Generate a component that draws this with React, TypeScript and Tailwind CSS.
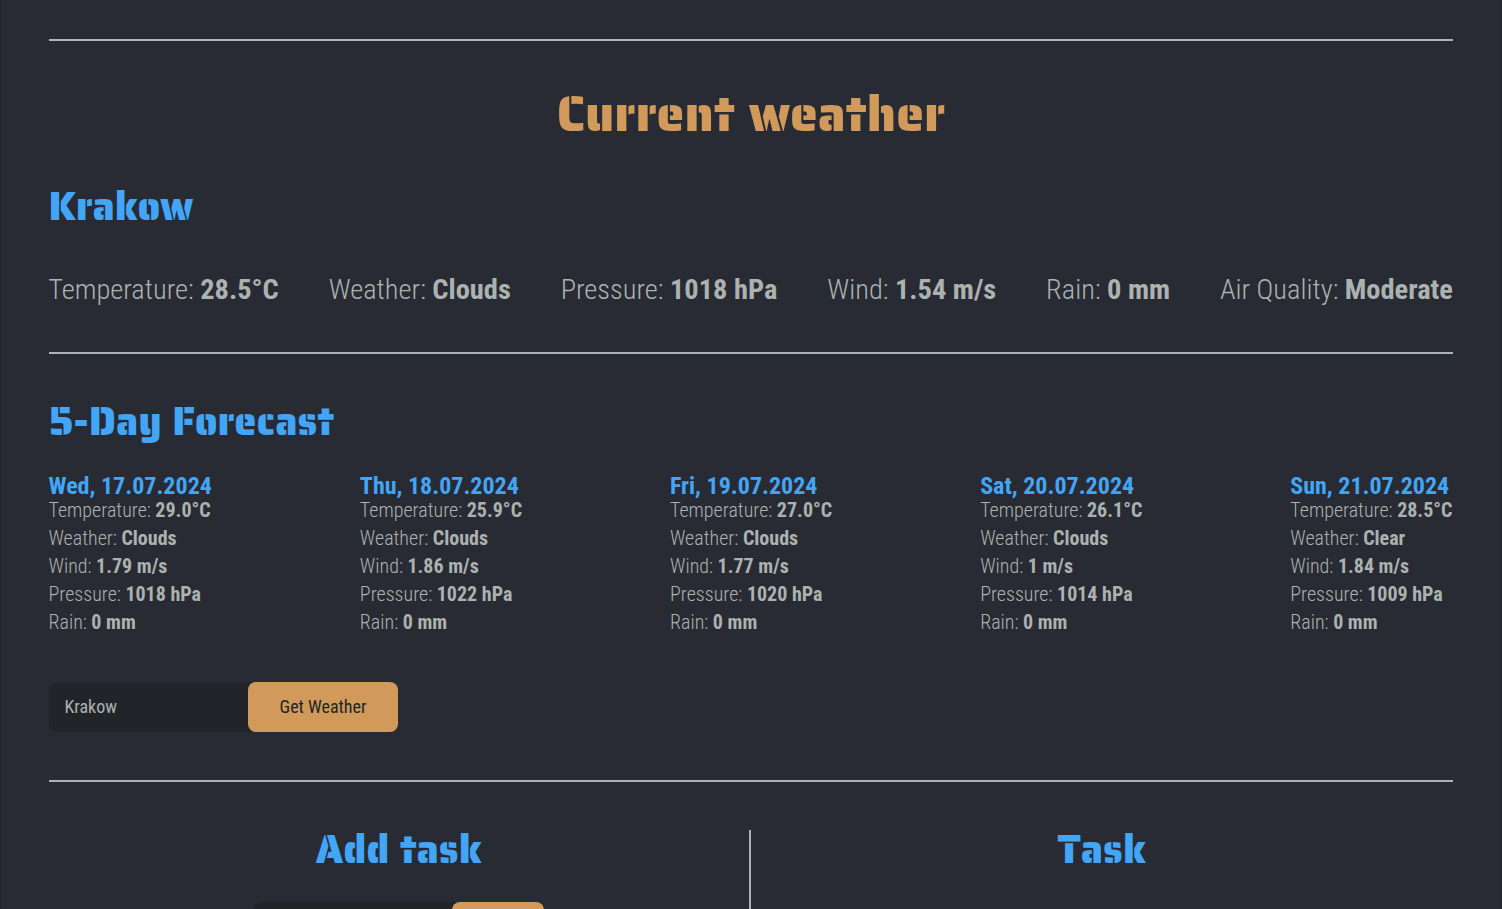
import React from "react";

const current = [
  ["Temperature", "28.5°C"],
  ["Weather", "Clouds"],
  ["Pressure", "1018 hPa"],
  ["Wind", "1.54 m/s"],
  ["Rain", "0 mm"],
  ["Air Quality", "Moderate"],
];

const forecast = [
  { date: "Wed, 17.07.2024", temperature: "29.0°C", weather: "Clouds", wind: "1.79 m/s", pressure: "1018 hPa", rain: "0 mm" },
  { date: "Thu, 18.07.2024", temperature: "25.9°C", weather: "Clouds", wind: "1.86 m/s", pressure: "1022 hPa", rain: "0 mm" },
  { date: "Fri, 19.07.2024", temperature: "27.0°C", weather: "Clouds", wind: "1.77 m/s", pressure: "1020 hPa", rain: "0 mm" },
  { date: "Sat, 20.07.2024", temperature: "26.1°C", weather: "Clouds", wind: "1 m/s", pressure: "1014 hPa", rain: "0 mm" },
  { date: "Sun, 21.07.2024", temperature: "28.5°C", weather: "Clear", wind: "1.84 m/s", pressure: "1009 hPa", rain: "0 mm" },
];

function Rule() {
  return <div className="h-0.5 shrink-0 bg-[#abb2bf]" />;
}

function Heading({ children }: { children: React.ReactNode }) {
  return (
    <h2 className="-ml-[0.5px] h-12 whitespace-nowrap font-['Saira_Stencil_One','Inter',sans-serif] text-[40px] leading-12 font-normal text-[#42a5f5]">
      {children}
    </h2>
  );
}

function Reading({ label, value }: { label: string; value: string }) {
  return (
    <p className="whitespace-nowrap">
      {label}: <strong className="font-bold">{value}</strong>
    </p>
  );
}

export default function App() {
  return (
    <main className="h-[909px] overflow-hidden border-x border-[#20242b] bg-[#282b33] px-12 pt-[39px] font-['Roboto_Condensed','Roboto',sans-serif] font-light text-[#abb2b0] font-stretch-condensed">
      <Rule />
      <h1 className="mt-[41px] mb-[37px] h-16 text-center font-['Saira_Stencil_One','Inter',sans-serif] text-[50px] leading-16 font-normal text-[#d19a5b]">
        Current weather
      </h1>
      <Heading>Krakow</Heading>
      <div className="mt-[39px] -ml-[0.75px] flex h-10 justify-between text-[28.45px] leading-10">
        {current.map(([label, value]) => <Reading key={label} label={label} value={value} />)}
      </div>
      <div className="mt-[42px]"><Rule /></div>
      <div className="mt-[44px]"><Heading>5-Day Forecast</Heading></div>
      <div className="-ml-[0.5px] mt-[28px] mr-[0.5px] flex justify-between text-xl leading-7">
        {forecast.map((day) => (
          <article key={day.date}>
            <h3 className="h-[22px] text-2xl leading-6 font-bold text-[#42a5f5]">{day.date}</h3>
            <Reading label="Temperature" value={day.temperature} />
            <Reading label="Weather" value={day.weather} />
            <Reading label="Wind" value={day.wind} />
            <Reading label="Pressure" value={day.pressure} />
            <Reading label="Rain" value={day.rain} />
          </article>
        ))}
      </div>
      <form className="mt-[46px] flex h-[50px] w-[349px] rounded-lg bg-[#212529] text-lg font-normal">
        <input aria-label="City" defaultValue="Krakow" className="w-[199px] pr-4 pl-[15.5px] outline-none" />
        <button type="button" className="w-[150px] rounded-lg bg-[#d19a5b] text-[#212529]">Get Weather</button>
      </form>
      <div className="mt-12"><Rule /></div>
      <div className="mt-12 flex h-[200px]">
        <section className="flex w-[702px] flex-col items-center border-r-2 border-[#abb2bf]">
          <div className="-mt-1"><Heading>Add task</Heading></div>
          <div className="mt-7 mr-0.5 flex h-[50px] w-[291px] rounded-lg bg-[#212529]">
            <div className="w-[199px]" />
            <div className="w-[92px] rounded-lg bg-[#d19a5b]" />
          </div>
        </section>
        <section className="-mt-1 flex flex-1 flex-col items-center"><Heading>Task</Heading></section>
      </div>
    </main>
  );
}
